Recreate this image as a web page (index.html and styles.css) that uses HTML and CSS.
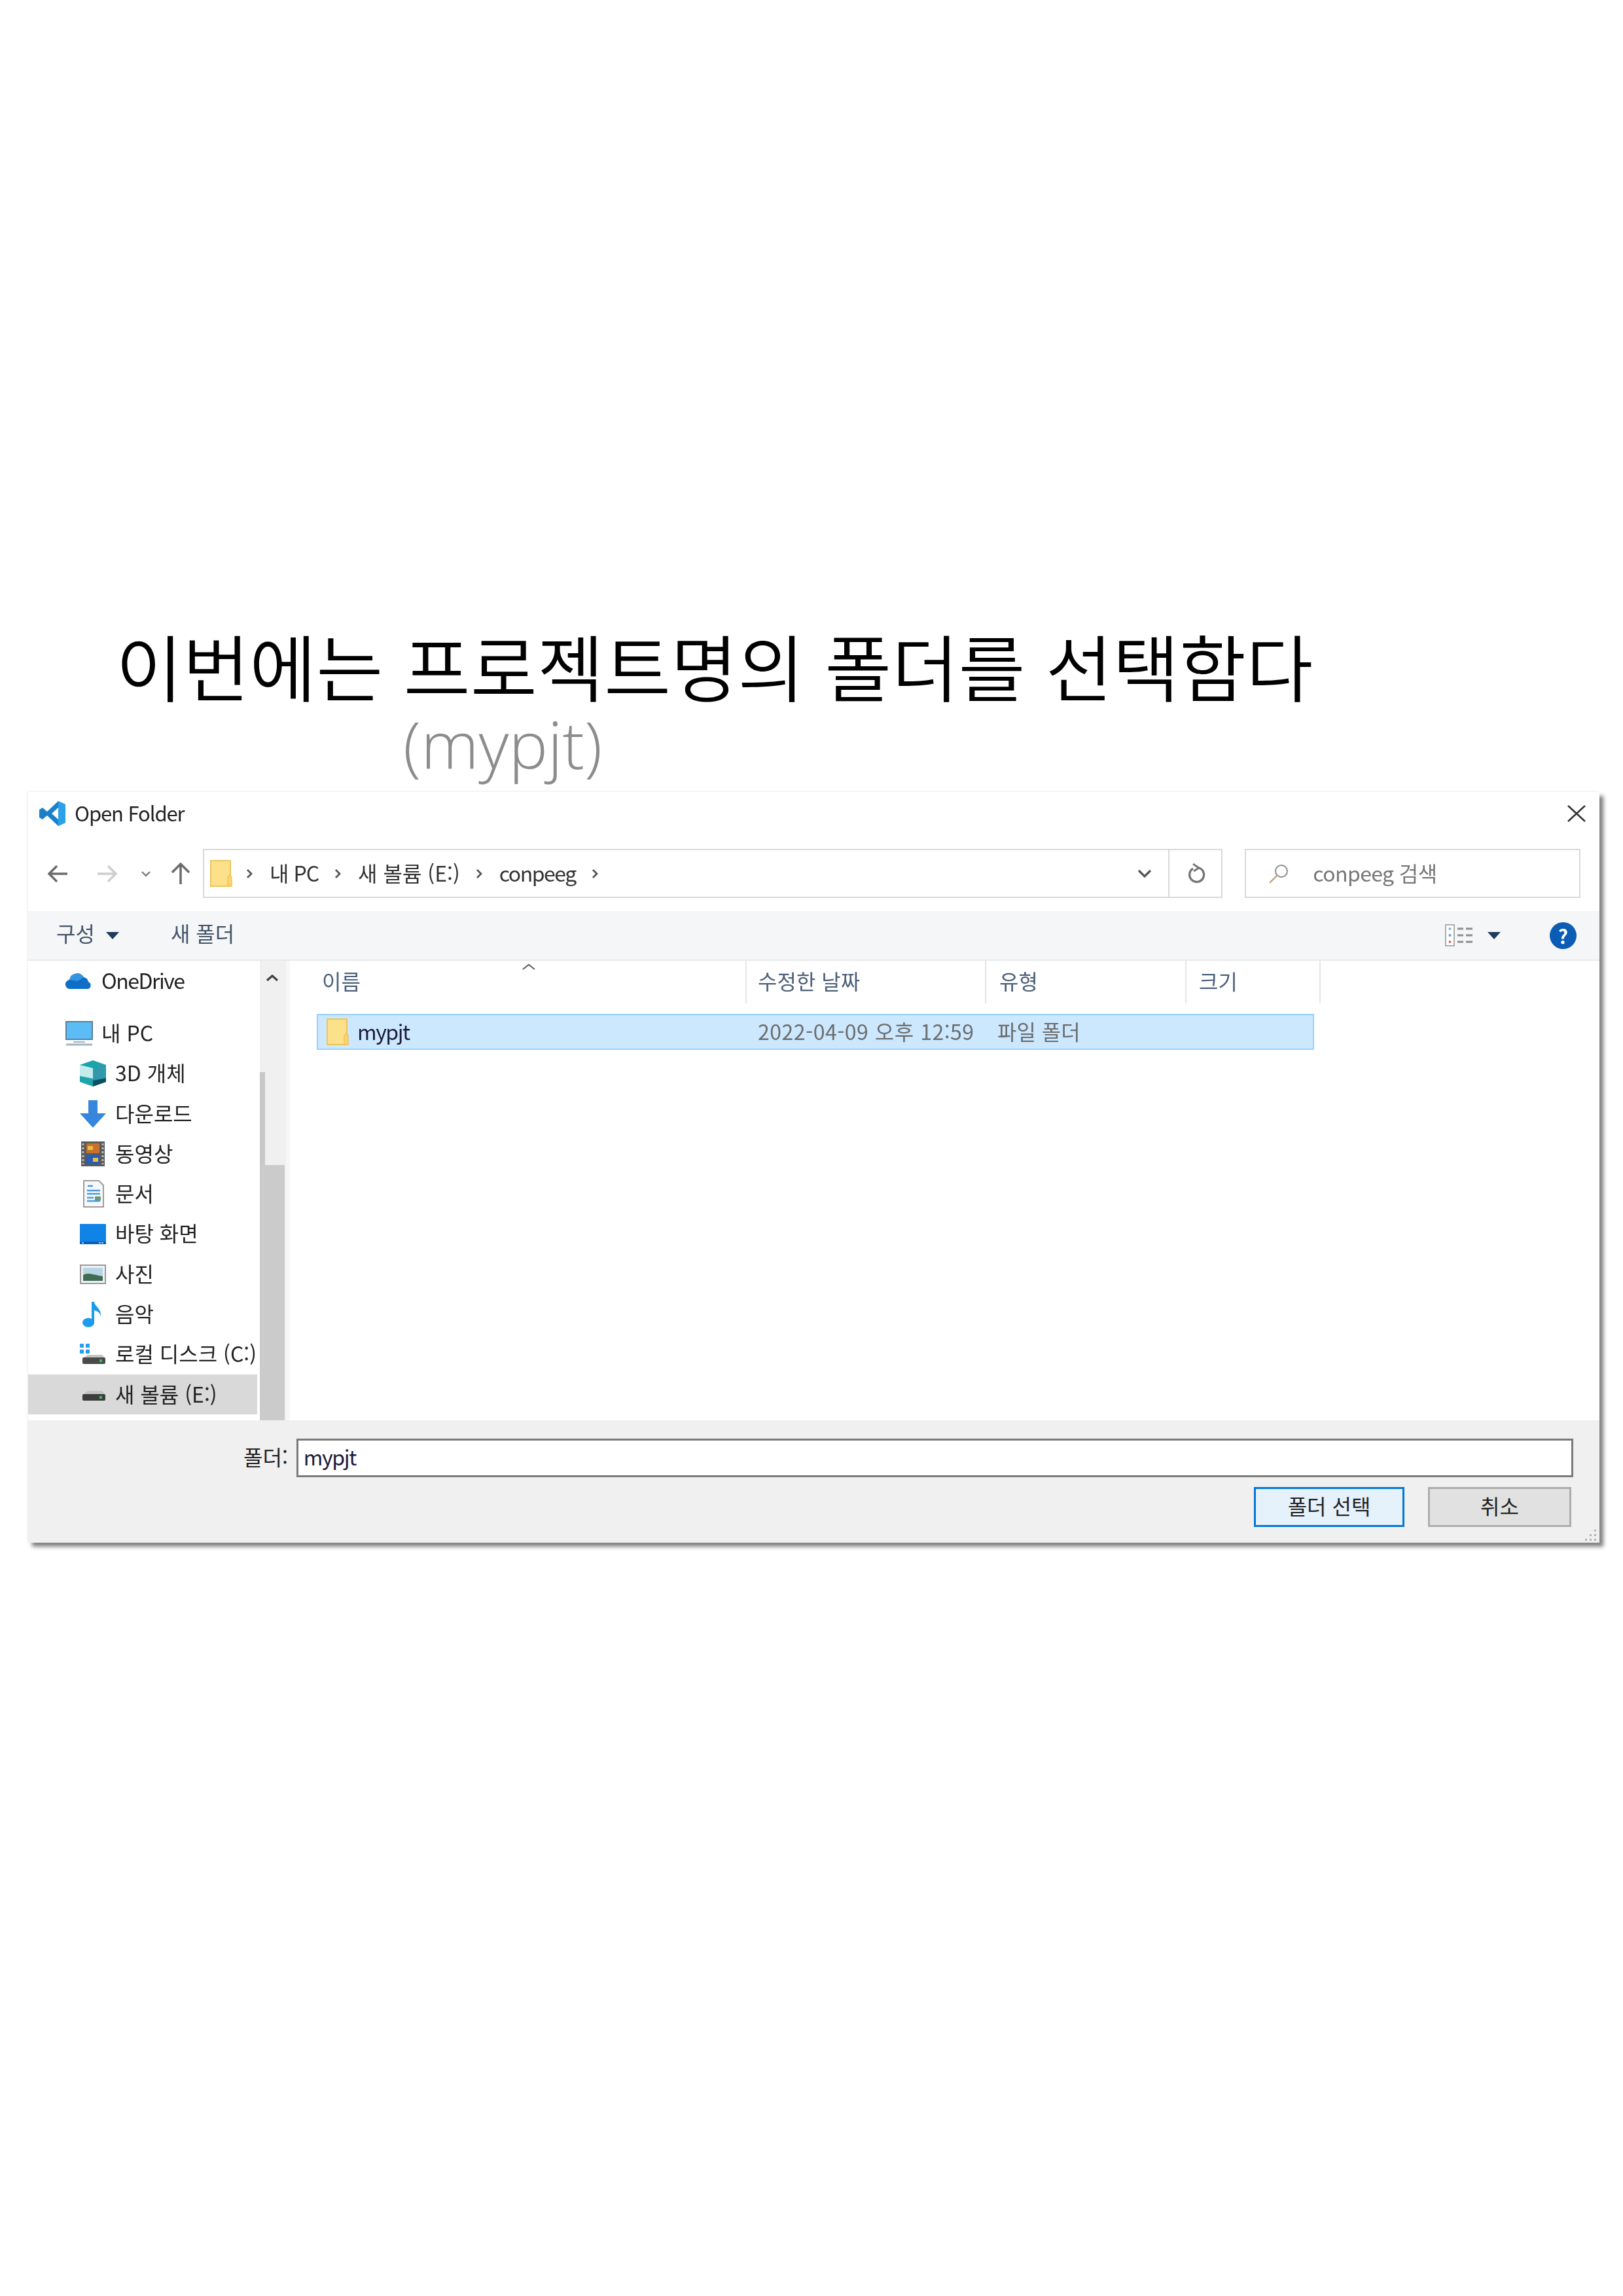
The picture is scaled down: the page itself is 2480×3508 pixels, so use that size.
FILE: index.html
```html
<!DOCTYPE html>
<html lang="ko">
<head>
  <meta charset="UTF-8">
  <title>Open Folder</title>
  <link rel="stylesheet" href="styles.css">
</head>
<body>
  <h1 class="headline">이번에는 프로젝트명의 폴더를 선택함다</h1>
  <div class="subline">(mypjt)</div>

  <div class="dialog">
    <div class="titlebar">
      <svg class="vscode" viewBox="0 0 41 40"><path fill="#1b80c8" d="M29 1l11 5v28l-11 5L12 23l-7 6-5-3V14l5-3 7 6zM29 11l-10 9 10 9z" fill-rule="evenodd"/><path fill="#2ba1ea" d="M29 1l11 5v28l-11 5z"/></svg>
      <span class="dialog-title">Open Folder</span>
      <svg class="close" viewBox="0 0 28 26"><path d="M1 1l26 24M27 1L1 25" stroke="#333" stroke-width="2.6" fill="none"/></svg>
    </div>

    <div class="navbar">
      <svg class="nav-arrow" viewBox="0 0 31 28"><path d="M30 14H3M14 2L2 14l12 12" stroke="#6b6b6b" stroke-width="3.5" fill="none"/></svg>
      <svg class="nav-arrow forward" viewBox="0 0 31 28"><path d="M1 14h27M17 2l12 12-12 12" stroke="#cfcfcf" stroke-width="3.5" fill="none"/></svg>
      <svg class="nav-down" viewBox="0 0 14 10"><path d="M1 2l6 6 6-6" stroke="#7a7a7a" stroke-width="2.4" fill="none"/></svg>
      <svg class="nav-up" viewBox="0 0 30 34"><path d="M15 33V3M2 15L15 2l13 13" stroke="#6b6b6b" stroke-width="3.5" fill="none"/></svg>

      <div class="address">
        <svg class="folder" viewBox="0 0 34 41"><rect x="1" y="1" width="30" height="39" fill="#fde08a" stroke="#ecc55a" stroke-width="2"/><path d="M27 40V26l3-3 3 3v14z" fill="#fbd56c" stroke="#ecc55a" stroke-width="1.5"/></svg>
        <svg class="sep" viewBox="0 0 10 16"><path d="M2 2l6 6-6 6" stroke="#555" stroke-width="2.8" fill="none"/></svg>
        <span class="crumb pc-crumb">내 PC</span>
        <svg class="sep" viewBox="0 0 10 16"><path d="M2 2l6 6-6 6" stroke="#555" stroke-width="2.8" fill="none"/></svg>
        <span class="crumb">새 볼륨 (E:)</span>
        <svg class="sep" viewBox="0 0 10 16"><path d="M2 2l6 6-6 6" stroke="#555" stroke-width="2.8" fill="none"/></svg>
        <span class="crumb latin">conpeeg</span>
        <svg class="sep" viewBox="0 0 10 16"><path d="M2 2l6 6-6 6" stroke="#555" stroke-width="2.8" fill="none"/></svg>
        <svg class="addr-down" viewBox="0 0 22 14"><path d="M2 2l9 9 9-9" stroke="#555" stroke-width="3.2" fill="none"/></svg>
        <div class="refresh">
          <svg viewBox="0 0 26 32"><path d="M7 8a11 11 0 1 0 9-1" stroke="#777" stroke-width="3.4" fill="none"/><path d="M7 1l9 6-8 5" stroke="#777" stroke-width="3" fill="none"/></svg>
        </div>
      </div>

      <div class="search">
        <svg viewBox="0 0 32 30"><circle cx="20" cy="11" r="9" stroke="#8a8a8a" stroke-width="2" fill="none"/><path d="M13 18L2 29" stroke="#b9a184" stroke-width="2.4"/></svg>
        <span>conpeeg 검색</span>
      </div>
    </div>

    <div class="toolbar">
      <span class="tool">구성</span>
      <svg class="caret" viewBox="0 0 20 11"><path d="M0 0h20L10 11z" fill="#1f3a5c"/></svg>
      <span class="tool new-folder">새 폴더</span>
      <svg class="view-icon" viewBox="0 0 43 34"><rect x="1" y="1" width="13" height="32" fill="#fff" stroke="#9a9a9a" stroke-width="1.6"/><circle cx="7.500" cy="7" r="2" fill="#7fb2dc"/><circle cx="7.500" cy="17" r="2" fill="#5ea0e0"/><circle cx="7.500" cy="27" r="2" fill="#e06a6a"/><path d="M19 7h9M32 7h10M19 17h9M32 17h10M19 27h9M32 27h10" stroke="#8c8c8c" stroke-width="3"/></svg>
      <svg class="caret view-caret" viewBox="0 0 20 11"><path d="M0 0h20L10 11z" fill="#1f3a5c"/></svg>
      <div class="help">?</div>
    </div>

    <div class="content">
      <div class="sidebar">
        <div class="nav-row top">
          <svg viewBox="0 0 42 26"><path d="M8 25a7 7 0 0 1-2-14 12 12 0 0 1 22-4 9 9 0 0 1 7 7 6 6 0 0 1 0 11z" fill="#0f6fc6"/><path d="M6 11a12 12 0 0 1 22-4l-9 6z" fill="#3394e0"/></svg>
          <span class="latin">OneDrive</span>
        </div>
        <div class="nav-row top pc">
          <svg viewBox="0 0 42 38"><rect x="1" y="1" width="40" height="27" fill="#5cbcf5" stroke="#5a7f9c" stroke-width="2"/><path d="M12 32h18" stroke="#9fb3c4" stroke-width="2"/><path d="M1 36h40" stroke="#a6b4c0" stroke-width="3"/></svg>
          <span>내 PC</span>
        </div>
        <div class="nav-row">
          <svg viewBox="0 0 40 40"><path d="M0 7l20-7 20 7v26l-20 7-20-7z" fill="#1da3ac"/><path d="M0 7l20 5v16L0 24z" fill="#c4ecec"/><path d="M20 12l20-5v20l-20 4z" fill="#3298ac"/><path d="M20 31l20-4v6l-20 7z" fill="#0d4f62"/></svg>
          <span>3D 개체</span>
        </div>
        <div class="nav-row">
          <svg viewBox="0 0 40 42"><path d="M13 0h14v20h13L20 42 0 20h13z" fill="#3586dc"/></svg>
          <span>다운로드</span>
        </div>
        <div class="nav-row">
          <svg viewBox="0 0 40 40"><rect x="2" y="1" width="36" height="38" fill="#5a5a5a"/><rect x="10" y="4" width="20" height="15" fill="#c8702c"/><rect x="10" y="21" width="20" height="15" fill="#2a5cb0"/><path d="M12 8h8v6h-8zM20 26h8v6h-8z" fill="#e8c040"/><path d="M5 4v32M35 4v32" stroke="#bbb" stroke-width="3" stroke-dasharray="3 3"/></svg>
          <span>동영상</span>
        </div>
        <div class="nav-row">
          <svg viewBox="0 0 40 42"><path d="M6 1h23l7 7v33H6z" fill="#f6f8fa" stroke="#9c9c9c" stroke-width="2"/><path d="M12 9h8M11 16h20M11 21h20M11 27h10M11 32h20" stroke="#4a9ae0" stroke-width="2.500"/><rect x="23" y="25" width="9" height="6" fill="#6c9878"/></svg>
          <span>문서</span>
        </div>
        <div class="nav-row">
          <svg viewBox="0 0 40 31"><rect width="40" height="31" rx="1" fill="#0f84e6"/><path d="M0 27h40v4H0z" fill="#0a5fb6"/><path d="M3 29h3M29 29h3M33 29h3" stroke="#cfe6f8" stroke-width="1.500"/></svg>
          <span>바탕 화면</span>
        </div>
        <div class="nav-row">
          <svg viewBox="0 0 40 30"><rect x="1" y="1" width="38" height="28" fill="#eef1f3" stroke="#9a9a9a" stroke-width="2"/><rect x="5" y="5" width="30" height="20" fill="#b9d4e4"/><path d="M5 25v-9c8-4 12-1 30 2v7z" fill="#3f6d54"/></svg>
          <span>사진</span>
        </div>
        <div class="nav-row">
          <svg viewBox="0 0 40 41"><path d="M18 1h4c1 8 11 10 10 22-1-5-5-8-10-9v19a9 7 0 1 1-4-6z" fill="#1d9cec"/></svg>
          <span>음악</span>
        </div>
        <div class="nav-row">
          <svg viewBox="0 0 40 32"><path d="M0 0h6v6H0zM9 0h6v6H9zM0 9h6v6H0zM9 9h6v6H9z" fill="#26a0ee"/><path d="M6 21l6-4h22l4 4z" fill="#c4c4c4"/><rect x="4" y="21" width="35" height="10" rx="2" fill="#4a4a4a"/><rect x="30" y="24" width="4" height="4" fill="#3fc05a"/></svg>
          <span>로컬 디스크 (C:)</span>
        </div>
        <div class="nav-row selected">
          <svg viewBox="0 0 40 20"><path d="M6 9l6-5h22l4 5z" fill="#c4c4c4"/><rect x="4" y="9" width="35" height="10" rx="2" fill="#3c3c3c"/><rect x="30" y="12" width="4" height="4" fill="#3fc05a"/></svg>
          <span>새 볼륨 (E:)</span>
        </div>
      </div>

      <div class="scrollbar">
        <svg class="scroll-up" viewBox="0 0 20 12"><path d="M2 10l8-7 8 7" stroke="#444" stroke-width="3.4" fill="none"/></svg>
        <div class="thumb-edge"></div>
        <div class="thumb"></div>
      </div>

      <div class="list">
        <div class="list-head">
          <div class="col name">이름</div>
          <div class="col date">수정한 날짜</div>
          <div class="col type">유형</div>
          <div class="col size">크기</div>
          <svg class="sort" viewBox="0 0 20 10"><path d="M1 9l9-7 9 7" stroke="#666" stroke-width="2.2" fill="none"/></svg>
        </div>
        <div class="file-row">
          <div class="file-name">
            <svg class="folder" viewBox="0 0 34 41"><rect x="1" y="1" width="30" height="39" fill="#fde08a" stroke="#ecc55a" stroke-width="2"/><path d="M27 40V26l3-3 3 3v14z" fill="#fbd56c" stroke="#ecc55a" stroke-width="1.500"/></svg>
            <span class="latin">mypjt</span>
          </div>
          <div class="file-date">2022-04-09 오후 12:59</div>
          <div class="file-type">파일 폴더</div>
        </div>
      </div>
    </div>

    <div class="footer">
      <div class="field">
        <label for="folderName">폴더:</label>
        <input id="folderName" type="text" value="mypjt" readonly>
      </div>
      <div class="buttons">
        <button class="primary" type="button">폴더 선택</button>
        <button type="button">취소</button>
      </div>
      <svg class="grip" viewBox="0 0 20 20"><path d="M16 2h3v3h-3zM9 9h3v3H9zM16 9h3v3h-3zM2 16h3v3H2zM9 16h3v3H9zM16 16h3v3h-3z" fill="#b5b5b5"/></svg>
    </div>
  </div>
</body>
</html>
```

FILE: styles.css
```css
body {
  margin: 0;
  padding-bottom: 1151px;
  background: #fff;
  font-family: "Noto Sans CJK KR", sans-serif;
}
svg {
  display: block;
  flex: none;
}
.latin {
  letter-spacing: -1.5px;
}

.headline {
  margin: 958px 0 0 177px;
  height: 116px;
  line-height: 116px;
  font-size: 111px;
  font-weight: 350;
  color: #000;
  white-space: nowrap;
}
.subline {
  margin-left: 616px;
  height: 136px;
  line-height: 124px;
  font-family: "Open Sans", sans-serif;
  font-size: 100px;
  font-weight: 300;
  color: #8c8c8c;
}

.dialog {
  position: relative;
  width: 2401px;
  height: 1147px;
  margin-left: 43px;
  display: flex;
  flex-direction: column;
  background: #fff;
  box-shadow: 6px 6px 6px #808080, -1px -1px 3px #eee;
  font-size: 32px;
  color: #222;
  filter: blur(0.7px);
}
.dialog-title,
.crumb,
.search span,
.nav-row span,
.file-name span {
  margin-bottom: 4px;
}

.titlebar {
  height: 66px;
  flex: none;
  display: flex;
  align-items: center;
  padding: 0 21px 0 17px;
}
.vscode {
  width: 41px;
  height: 40px;
}
.dialog-title {
  margin-left: 13px;
  font-size: 31px;
  letter-spacing: -1.1px;
}
.close {
  width: 28px;
  height: 26px;
  margin-left: auto;
}

.navbar {
  height: 116px;
  flex: none;
  box-sizing: border-box;
  padding: 21px 29px 20px 30px;
  display: flex;
  align-items: center;
  gap: 32px;
}
.nav-arrow {
  width: 31px;
  height: 28px;
}
.nav-arrow.forward {
  margin-left: 12px;
}
.nav-down {
  width: 14px;
  height: 10px;
  margin-left: 5px;
}
.nav-up {
  width: 30px;
  height: 34px;
  margin-left: -1px;
}
.address,
.search {
  height: 75px;
  box-sizing: border-box;
  border: 2px solid #d9d9d9;
  display: flex;
  align-items: center;
}
.address {
  width: 1559px;
  margin-left: -13px;
  padding-left: 9px;
}
.address .folder {
  width: 34px;
  height: 41px;
  margin-right: -3px;
}
.sep {
  width: 10px;
  height: 16px;
  margin: 0 26px 0 24px;
}
.crumb {
  color: #333;
}
.crumb.pc-crumb {
  letter-spacing: -1px;
}
.addr-down {
  width: 22px;
  height: 14px;
  margin-left: auto;
}
.refresh {
  width: 81px;
  height: 100%;
  margin-left: 25px;
  padding-left: 4px;
  box-sizing: border-box;
  border-left: 2px solid #d9d9d9;
  display: flex;
  align-items: center;
  justify-content: center;
}
.refresh svg {
  width: 26px;
  height: 32px;
}
.search {
  width: 513px;
  margin-left: 2px;
  padding-left: 34px;
  gap: 36px;
  color: #777;
  letter-spacing: -0.6px;
}
.search svg {
  width: 32px;
  height: 30px;
}

.toolbar {
  height: 76px;
  flex: none;
  box-sizing: border-box;
  padding: 0 35px 0 43px;
  display: flex;
  align-items: center;
  background: #f5f6f7;
  border-bottom: 2px solid #e8e9ea;
}
.tool {
  margin-bottom: 8px;
  color: #44546a;
}
.caret {
  width: 20px;
  height: 11px;
  margin-left: 17px;
}
.new-folder {
  margin-left: 79px;
}
.view-icon {
  width: 43px;
  height: 34px;
  margin-left: auto;
}
.view-caret {
  margin-left: 22px;
}
.help {
  width: 41px;
  height: 41px;
  margin-left: 75px;
  border-radius: 50%;
  background: #0a5cb4;
  color: #fff;
  font-size: 30px;
  font-weight: 700;
  line-height: 41px;
  text-align: center;
}

.content {
  flex: 1;
  display: flex;
  min-height: 0;
}
.sidebar {
  width: 354px;
  flex: none;
}
.nav-row {
  height: 61.3px;
  margin-right: 4px;
  padding-left: 79px;
  display: flex;
  align-items: center;
  gap: 14px;
  color: #222;
  white-space: nowrap;
}
.nav-row svg {
  width: 40px;
}
.nav-row.top {
  padding-left: 57px;
  gap: 13px;
}
.nav-row.top svg {
  width: 42px;
}
.nav-row.pc {
  margin-top: 19px;
}
.nav-row.selected {
  background: #d9d9d9;
}

.scrollbar {
  width: 46px;
  flex: none;
  background: #f0f0f0;
  display: flex;
  flex-direction: column;
  border-right: 6px solid #f7f7f7;
  box-sizing: border-box;
}
.scroll-up {
  width: 20px;
  height: 12px;
  margin: 20px 0 138px 9px;
}
.thumb-edge {
  width: 8px;
  height: 142px;
  background: #c8c8c8;
}
.thumb {
  flex: 1;
  width: 38px;
  background: #cbcbcb;
}

.list {
  flex: 1;
}
.list-head {
  position: relative;
  height: 65px;
  display: grid;
  grid-template-columns: 698px 366px 306px 205px;
  color: #4c607a;
}
.col {
  line-height: 61px;
  border-right: 2px solid #e5e5e5;
  box-sizing: border-box;
}
.col.name {
  padding-left: 49px;
}
.col.date {
  padding-left: 17px;
}
.col.type {
  padding-left: 20px;
}
.col.size {
  padding-left: 19px;
}
.sort {
  position: absolute;
  left: 355px;
  top: 4px;
  width: 20px;
  height: 10px;
}
.file-row {
  width: 1524px;
  height: 55px;
  margin: 16px 0 0 41px;
  box-sizing: border-box;
  border: 2px solid #99d1ff;
  background: #cce8ff;
  display: grid;
  grid-template-columns: 672px 366px 1fr;
  align-items: center;
  color: #6d6d6d;
}
.file-date,
.file-type {
  padding-bottom: 4px;
}
.file-date {
  letter-spacing: 0.5px;
}
.file-name {
  display: flex;
  align-items: center;
  gap: 13px;
  padding-left: 13px;
  color: #1c1c3c;
}
.file-name .folder {
  width: 34px;
  height: 41px;
}

.footer {
  position: relative;
  height: 187px;
  flex: none;
  box-sizing: border-box;
  padding: 28px 40px 0 329px;
  background: #f0f0f0;
}
.field {
  display: flex;
  align-items: center;
  gap: 13px;
}
.field label {
  margin-bottom: 5px;
}
.field input {
  flex: 1;
  height: 59px;
  box-sizing: border-box;
  padding: 0 8px 5px;
  border: 3px solid #7a7a7a;
  background: #fff;
  font: inherit;
  letter-spacing: -1.4px;
  color: #1c1c3c;
}
.buttons {
  margin-top: 15px;
  padding-right: 3px;
  display: flex;
  justify-content: flex-end;
  gap: 36px;
}
.buttons button {
  width: 219px;
  height: 61px;
  box-sizing: border-box;
  padding-bottom: 6px;
  border: 3px solid #adadad;
  background: #e1e1e1;
  font: inherit;
  color: #222;
}
.buttons button.primary {
  width: 230px;
  border-color: #0078d7;
  background: #e5f1fb;
}
.grip {
  position: absolute;
  right: 4px;
  bottom: 2px;
  width: 20px;
  height: 20px;
}
```
